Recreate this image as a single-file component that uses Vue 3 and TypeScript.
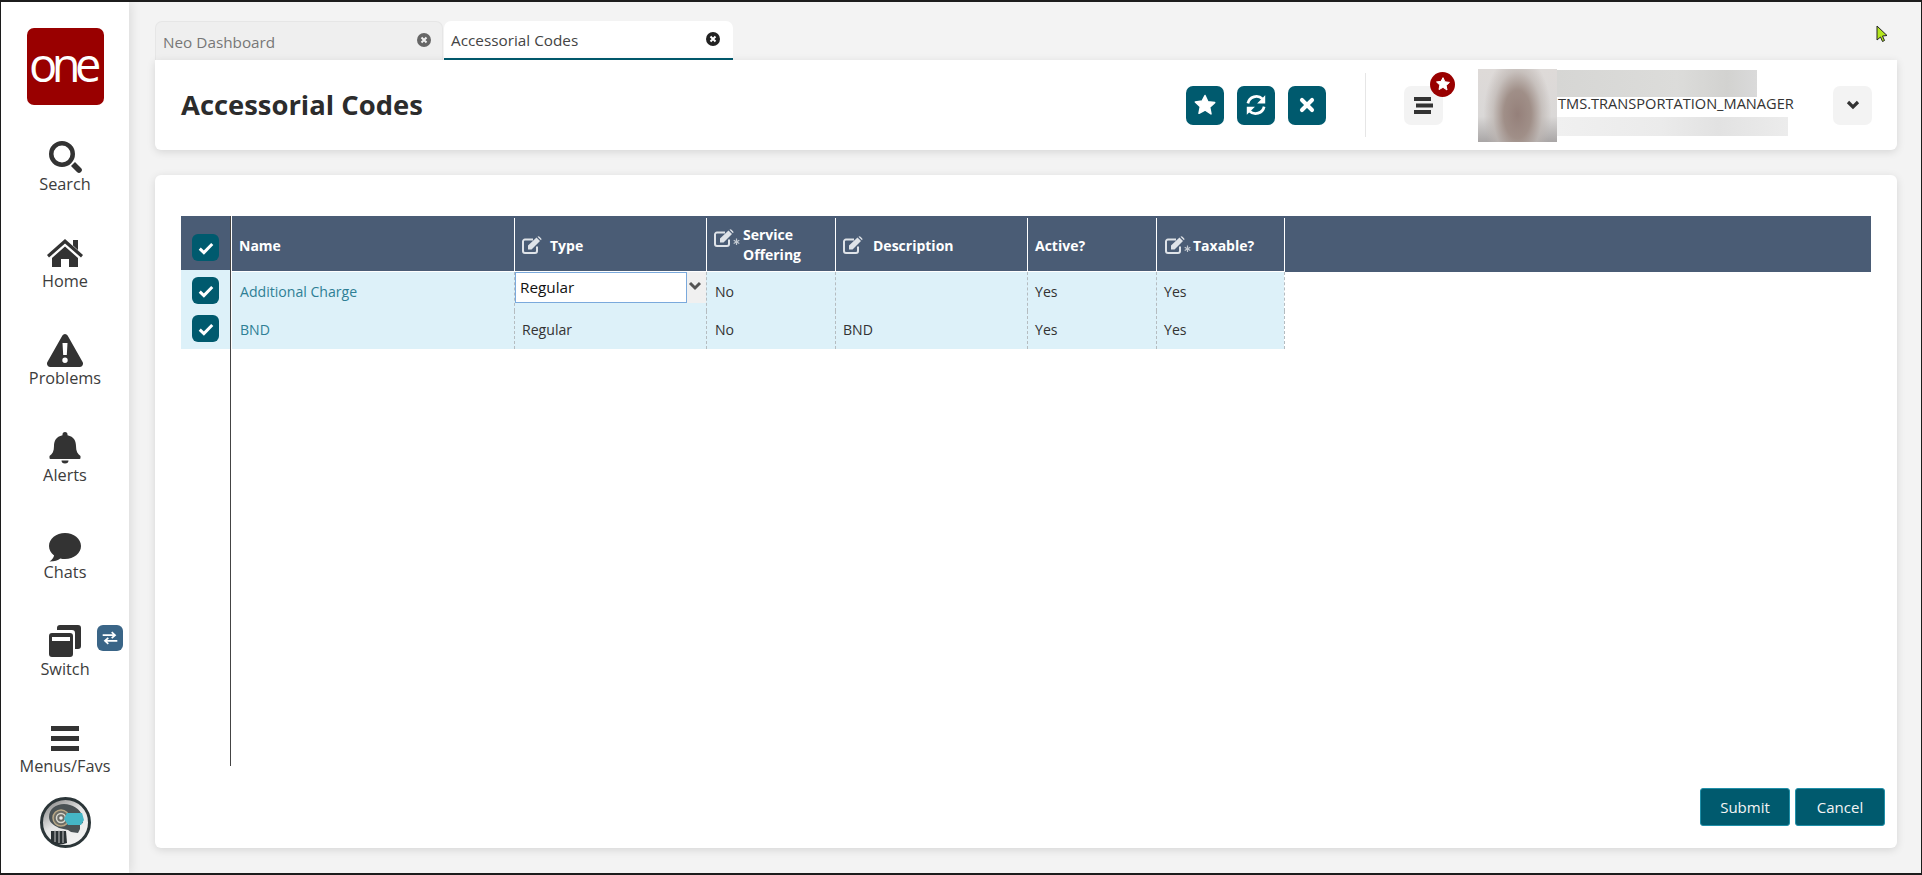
<script setup lang="ts">
interface NavItem { label: string; d: string; cls?: string }
interface Col { key: string; title: string[]; w: number; edit: boolean; req: boolean; cls: string }
interface Row { name: string; type: string; service: string; description: string; active: string; taxable: string; editing: boolean }

const nav: NavItem[] = [
  { label: 'Search', d: 'M17 6a13 13 0 1 1 0 26a13 13 0 1 1 0-26zM17 10.500a8.500 8.500 0 1 0 0 17a8.500 8.500 0 1 0 0-17zM26 31L30 27L36 33a2.800 2.800 0 0 1-4 4z' },
  { label: 'Home', d: 'M20 7L38 23L36 25.500L20 11.500L4 25.500L2 23zM28 8h5v10l-5-4.500zM20 14.500L33 26V35H24V27H16V35H7V26z' },
  { label: 'Problems', d: 'M20 5a3 3 0 0 1 2.600 1.500L37.600 33a3.400 3.400 0 0 1-2.600 5H5a3.400 3.400 0 0 1-2.600-5L17.400 6.500A3 3 0 0 1 20 5zM17.500 14L18.200 26h3.600L22.500 14zM20 28.500a2.700 2.700 0 1 0 0 5.400a2.700 2.700 0 1 0 0-5.400z' },
  { label: 'Alerts', d: 'M20 6a2.500 2.500 0 0 1 2.500 2.500v.7C29 10.500 31 15 31 20c0 5 1.500 8 4.500 10v2a1 1 0 0 1-1 1H5.500a1 1 0 0 1-1-1v-2c3-2 4.500-5 4.500-10c0-5 2-9.500 8.500-10.800V8.500A2.500 2.500 0 0 1 20 6zM16.500 34.500h7a3.500 3 0 0 1-7 0z' },
  { label: 'Chats', d: 'M20 10c8.800 0 16 5.800 16 13s-7.200 13-16 13c-1.600 0-3.200-.2-4.700-.6C13 37.500 9.500 38.300 4.500 38.500c2.500-1.500 4-3.600 4.600-6C5.900 30 4 26.700 4 23c0-7.200 7.200-13 16-13z' },
  { label: 'Switch', d: 'M15 5h18a3 3 0 0 1 3 3v18a3 3 0 0 1-3 3h-3V13a3 3 0 0 0-3-3H12V8a3 3 0 0 1 3-3zM7 13h18a3 3 0 0 1 3 3v18a3 3 0 0 1-3 3H7a3 3 0 0 1-3-3V16a3 3 0 0 1 3-3zM7 17v4h18v-4z' },
  { label: 'Menus/Favs', d: 'M6 9h28v5H6zM6 19h28v5H6zM6 29h28v5H6z', cls: 'last' },
]

const cols: Col[] = [
  { key: 'name', title: ['Name'], w: 282, edit: false, req: false, cls: 'c-name' },
  { key: 'type', title: ['Type'], w: 192, edit: true, req: false, cls: 'c-type' },
  { key: 'service', title: ['Service', 'Offering'], w: 129, edit: true, req: true, cls: 'c-service' },
  { key: 'description', title: ['Description'], w: 192, edit: true, req: false, cls: 'c-desc' },
  { key: 'active', title: ['Active?'], w: 129, edit: false, req: false, cls: 'c-active' },
  { key: 'taxable', title: ['Taxable?'], w: 128, edit: true, req: true, cls: 'c-tax' },
]

const rows: Row[] = [
  { name: 'Additional Charge', type: 'Regular', service: 'No', description: '', active: 'Yes', taxable: 'Yes', editing: true },
  { name: 'BND', type: 'Regular', service: 'No', description: 'BND', active: 'Yes', taxable: 'Yes', editing: false },
]

const cell = (r: Row, key: string): string => String(r[key as keyof Row])
const star = 'M12 2.500l2.900 6.200 6.800.9-5 4.700 1.300 6.700L12 17l-6 3.300 1.300-6.700-5-4.700 6.800-.9z'
</script>

<template>
  <div class="frame">
    <aside class="side">
      <div class="logo"><span>one</span></div>
      <nav class="nav">
        <div v-for="n in nav" :key="n.label" class="nav-item" :class="n.cls">
          <svg class="nav-icon" viewBox="0 0 40 40" width="40" height="40"><path :d="n.d" /></svg>
          <span class="nav-label">{{ n.label }}</span>
          <span v-if="n.label === 'Switch'" class="switch-badge">
            <svg viewBox="0 0 16 16" width="18" height="18">
              <path d="M1.500 5.500h10.500M9.500 2.800l3 2.700-3 2.700M14.500 10.500H4M6.500 7.800l-3 2.700 3 2.700" fill="none" stroke="#fff" stroke-width="1.500" />
            </svg>
          </span>
        </div>
      </nav>
      <svg class="robot" viewBox="0 0 51 51" width="51" height="51">
        <defs>
          <linearGradient id="rb" x1="0.1" y1="0.1" x2="0.7" y2="1">
            <stop offset="0" stop-color="#8d8d8d" />
            <stop offset="0.45" stop-color="#e6e6e6" />
            <stop offset="1" stop-color="#f4f4f4" />
          </linearGradient>
        </defs>
        <circle cx="25.500" cy="25.500" r="24" fill="url(#rb)" stroke="#2b3538" stroke-width="3" />
        <path d="M9 20c0-8 7-13 15-13s17 5 18 12l1 7-3 1v5l-2 4-7-1-3-2-9-2c-6-3-10-6-10-11z" fill="#4a5255" />
        <circle cx="21" cy="21" r="8" fill="#6d6d66" stroke="#b9a887" stroke-width="1.500" />
        <circle cx="21" cy="21" r="4.500" fill="none" stroke="#d9d9d0" stroke-width="1.500" />
        <circle cx="21" cy="21" r="1.800" fill="#eee" />
        <path d="M27 16h15l2 7-3 5H28l-4-6z" fill="#45b5c6" />
        <path d="M11 34h15l1 12c-5 2-11 2-16-1z" fill="#2b3134" />
        <path d="M15 33v12M19 33v13M23 33v13" stroke="#c9c9c9" stroke-width="1" />
      </svg>
    </aside>

    <main class="main">
      <div class="tabs">
        <div class="tab">
          <span>Neo Dashboard</span>
          <svg class="tab-x" viewBox="0 0 14 14" width="14" height="14"><circle cx="7" cy="7" r="7" fill="#666" /><path d="M4.500 4.500l5 5M9.500 4.500l-5 5" stroke="#f0f0f0" stroke-width="2" /></svg>
        </div>
        <div class="tab active">
          <span>Accessorial Codes</span>
          <svg class="tab-x" viewBox="0 0 14 14" width="14" height="14"><circle cx="7" cy="7" r="7" fill="#222" /><path d="M4.500 4.500l5 5M9.500 4.500l-5 5" stroke="#fff" stroke-width="2" /></svg>
        </div>
      </div>

      <header class="head card">
        <h1 class="title">Accessorial Codes</h1>
        <div class="actions">
          <button class="tool"><svg viewBox="0 0 24 24" width="24" height="24"><path :d="star" fill="#fff" stroke="#fff" stroke-width="1.500" stroke-linejoin="round" /></svg></button>
          <button class="tool">
            <svg viewBox="0 0 24 24" width="26" height="26">
              <path d="M4.500 10.500A8 8 0 0 1 18 6.500M19.500 13.500A8 8 0 0 1 6 17.500" fill="none" stroke="#fff" stroke-width="2.500" />
              <path d="M20.500 3v7.500h-7.500zM3.500 21v-7.500h7.500z" fill="#fff" />
            </svg>
          </button>
          <button class="tool"><svg viewBox="0 0 24 24" width="22" height="22"><path d="M6.500 6.500l11 11M17.500 6.500l-11 11" stroke="#fff" stroke-width="4.400" stroke-linecap="round" /></svg></button>
        </div>
        <div class="divider"></div>
        <div class="menu-btn">
          <svg viewBox="0 0 19 17" width="19" height="17"><path d="M0 0h17v4H0zM2 6.500h17v4H2zM0 13h17v4H0z" fill="#333" /></svg>
          <span class="badge"><svg viewBox="0 0 24 24" width="16" height="16"><path :d="star" fill="#fff" stroke="#fff" stroke-width="1.500" stroke-linejoin="round" /></svg></span>
        </div>
        <div class="avatar"></div>
        <div class="user">
          <div class="blur-a"></div>
          <div class="role">TMS.TRANSPORTATION_MANAGER</div>
          <div class="blur-b"></div>
        </div>
        <div class="chev-btn"><svg viewBox="0 0 14 10" width="14" height="10"><path d="M2 2l5 5 5-5" fill="none" stroke="#333" stroke-width="3.200" /></svg></div>
      </header>

      <section class="body card">
        <div class="grid">
          <div class="pick">
            <div class="pick-head"><span class="check"><svg viewBox="0 0 16 16" width="20" height="20"><path d="M3 8.500l3.300 3.200L13 4.800" fill="none" stroke="#fff" stroke-width="2.400" /></svg></span></div>
            <div v-for="r in rows" :key="r.name" class="pick-row"><span class="check"><svg viewBox="0 0 16 16" width="20" height="20"><path d="M3 8.500l3.300 3.200L13 4.800" fill="none" stroke="#fff" stroke-width="2.400" /></svg></span></div>
          </div>
          <div class="data">
            <div class="h-row">
              <div v-for="c in cols" :key="c.key" class="h-cell" :class="c.cls" :style="{ width: c.w + 'px' }">
                <svg v-if="c.edit" class="edit" :class="{ req: c.req }" :viewBox="c.req ? '0 0 26 20' : '0 0 20 20'">
                  <path d="M15 10.500v4.500a2 2 0 0 1-2 2H3a2 2 0 0 1-2-2V5.500a2 2 0 0 1 2-2h8" fill="none" stroke="#dfe3e8" stroke-width="2" />
                  <path d="M6 9.500L14.500 1.500L18 5L9.500 13.500H6zM15.500.8a1.500 1.500 0 0 1 2 0l1.500 1.500a1.500 1.500 0 0 1 0 2z" fill="#dfe3e8" />
                  <path v-if="c.req" d="M22.500 9.600v6.400M19.700 11.200l5.600 3.200M25.300 11.200l-5.600 3.200" stroke="#c3cad2" stroke-width="1.200" />
                </svg>
                <span class="h-text"><span v-for="t in c.title" :key="t" class="h-line">{{ t }}</span></span>
              </div>
              <div class="h-fill"></div>
            </div>
            <div v-for="r in rows" :key="r.name" class="d-row">
              <div v-for="c in cols" :key="c.key" class="d-cell" :class="c.cls" :style="{ width: c.w + 'px' }">
                <template v-if="c.key === 'type' && r.editing">
                  <div class="select">
                    <span class="select-val">{{ r.type }}</span>
                    <span class="select-arrow"><svg viewBox="0 0 14 10" width="14" height="10"><path d="M2 2l5 5 5-5" fill="none" stroke="#555" stroke-width="3" /></svg></span>
                  </div>
                </template>
                <a v-else-if="c.key === 'name'" class="link">{{ r.name }}</a>
                <span v-else>{{ cell(r, c.key) }}</span>
              </div>
            </div>
          </div>
        </div>
        <div class="foot">
          <button class="btn">Submit</button>
          <button class="btn">Cancel</button>
        </div>
      </section>
    </main>

    <svg class="cursor" viewBox="0 0 12 18" width="12" height="18"><path d="M1 1v14l3.500-3 2 4.500 2-1-2-4.500 4.500-.5z" fill="#b4e61e" stroke="#222" stroke-width="1" /></svg>
  </div>
</template>

<style>
html, body { margin: 0; padding: 0; background: #f3f3f3; }
</style>

<style scoped>
.frame {
  position: relative;
  box-sizing: border-box;
  width: 1922px;
  height: 875px;
  display: flex;
  overflow: hidden;
  background: #f3f3f3;
  border-style: solid;
  border-color: #1c1c1c;
  border-width: 2px 1px 2px 1px;
  font-family: "Open Sans", "Liberation Sans", sans-serif;
  color: #333;
}
.side {
  width: 128px;
  flex: none;
  background: #fff;
  box-shadow: 2px 0 10px rgba(0, 0, 0, 0.1);
  display: flex;
  flex-direction: column;
  align-items: center;
  z-index: 1;
}
.logo {
  margin-top: 26px;
  width: 77px;
  height: 77px;
  background: #990000;
  border-radius: 7px;
  display: flex;
  align-items: center;
  justify-content: center;
  color: #fff;
  font-size: 47px;
  font-weight: 400;
  letter-spacing: -5.500px;
  line-height: 1;
}
.logo span { margin-left: -5px; margin-top: -5px; }
.nav { margin-top: 30px; width: 100%; display: flex; flex-direction: column; }
.nav-item {
  position: relative;
  height: 97px;
  display: flex;
  flex-direction: column;
  align-items: center;
}
.nav-item.last { height: 80px; }
.nav-icon { fill: #333; display: block; }
.nav-label { margin-top: -2px; font-size: 16.300px; line-height: 22px; color: #3c3c3c; }
.switch-badge {
  position: absolute;
  left: 96px;
  top: 5px;
  width: 26px;
  height: 26px;
  border-radius: 6px;
  background: #3a6587;
  display: flex;
  align-items: center;
  justify-content: center;
}
.robot { display: block; }

.main { width: 1742px; margin-left: 26px; flex: none; display: flex; flex-direction: column; padding-top: 19px; }
.tabs { display: flex; height: 39px; gap: 1px; }
.tab {
  box-sizing: border-box;
  width: 288px;
  background: #efefef;
  border: 1px solid #e6e6e6;
  border-bottom: 0;
  border-radius: 7px 7px 0 0;
  display: flex;
  align-items: center;
  justify-content: space-between;
  padding: 0 11px 0 7px;
  font-size: 15.300px;
  color: #777;
}
.tab > span { margin-top: 1px; }
.tab-x { margin-top: -2px; }
.tab.active {
  width: 289px;
  background: #fff;
  border: 0;
  border-bottom: 2px solid #005a6e;
  color: #444;
  padding: 0 13px 0 7px;
}
.card { background: #fff; border-radius: 0 0 6px 6px; box-shadow: 0 2px 8px rgba(0, 0, 0, 0.12); }
.head { height: 90px; display: flex; align-items: center; padding: 0 25px 0 26px; }
.title { margin: -2px 0 0; font-size: 27.400px; font-weight: 700; color: #2c2c2c; }
.actions { margin-left: auto; display: flex; gap: 13px; }
.tool {
  width: 38px;
  height: 39px;
  padding: 0;
  border: 0;
  border-radius: 7px;
  background: #005a6e;
  display: flex;
  align-items: center;
  justify-content: center;
}
.divider { width: 1px; height: 64px; margin: 0 38px 0 39px; background: #e6e6e6; }
.menu-btn {
  position: relative;
  width: 39px;
  height: 39px;
  border-radius: 7px;
  background: #f3f3f3;
  display: flex;
  align-items: center;
  justify-content: center;
}
.badge {
  position: absolute;
  left: 26px;
  top: -14px;
  width: 25px;
  height: 25px;
  border-radius: 50%;
  background: #990000;
  display: flex;
  align-items: center;
  justify-content: center;
}
.avatar {
  margin-left: 35px;
  width: 79px;
  height: 73px;
  background:
    radial-gradient(ellipse 34px 60px at 50% 62%, #95807a 0%, #a08f88 40%, rgba(190, 182, 178, 0.7) 72%, rgba(225, 225, 225, 0) 100%),
    linear-gradient(#dedad8, #dad8d7 65%, #a9a6a6);
}
.user { width: 276px; display: flex; flex-direction: column; height: 66px; align-self: flex-start; margin-top: 10px; }
.blur-a { width: 200px; height: 27px; flex: none; background: linear-gradient(90deg, #d6d6d4, #dcdcda 60%, #d2d2d0 85%, #dadada); }
.role { height: 20px; flex: none; line-height: 12px; padding-left: 1px; font-size: 14.600px; color: #333; white-space: nowrap; }
.blur-b { width: 231px; height: 19px; flex: none; background: linear-gradient(90deg, #f0f0f0, #ebebeb 45%, #e2e2e2 70%, #ececec); }
.chev-btn {
  width: 39px;
  height: 39px;
  border-radius: 7px;
  background: #f3f3f3;
  display: flex;
  align-items: center;
  justify-content: center;
}

.body { margin-top: 25px; height: 673px; box-sizing: border-box; padding: 41px 26px 0; border-radius: 6px; }
.grid { display: flex; height: 550px; width: 1690px; }
.pick { width: 49px; flex: none; border-right: 1px solid #444; }
.pick-head { height: 54px; background: #4a5c75; display: flex; align-items: flex-start; justify-content: center; padding-top: 18px; box-sizing: border-box; }
.pick-row { box-sizing: border-box; background: #ddf1f9; display: flex; align-items: flex-start; justify-content: center; }
.pick-row:nth-child(2) { height: 41px; padding-top: 7px; }
.pick-row:nth-child(3) { height: 38px; padding-top: 4px; }
.check {
  width: 27px;
  height: 27px;
  border-radius: 6px;
  background: #005a6e;
  display: flex;
  align-items: center;
  justify-content: center;
}
.data { flex: 1; padding-left: 1px; min-width: 0; }
.h-row { display: flex; height: 56px; background: #4a5c75; }
.h-cell {
  box-sizing: border-box;
  margin-top: 2px;
  height: 54px;
  flex: none;
  display: flex;
  align-items: center;
  gap: 8px;
  padding: 3px 0 0 7px;
  border-left: 1px solid #fff;
  border-bottom: 1px solid #fff;
  font-size: 14px;
  font-weight: 700;
  color: #fff;
}
.h-cell.c-name { border-left: 0; padding-left: 7px; }
.h-cell.c-service { gap: 3px; padding-top: 0; }
.h-cell.c-tax { gap: 2px; padding-left: 8px; }
.h-cell.c-desc { gap: 10px; }
.h-fill { flex: 1; margin-top: 2px; border-left: 1px solid #fff; }
.h-text { display: flex; flex-direction: column; line-height: 20px; }
.h-line { display: block; white-space: nowrap; }
.edit { width: 20px; height: 20px; flex: none; }
.edit.req { width: 26px; }
.c-service .edit { align-self: flex-start; margin-top: 11px; }
.d-row { display: flex; height: 38.500px; width: 1052px; background: #ddf1f9; }
.d-row::after { content: ""; width: 0; border-left: 1px dashed #b5bcc0; }
.d-cell {
  box-sizing: border-box;
  flex: none;
  display: flex;
  align-items: center;
  padding-left: 7px;
  font-size: 14.100px;
  color: #333;
  border-left: 1px dashed #b5bcc0;
  position: relative;
}
.d-cell.c-name { border-left: 0; padding-left: 8px; }
.d-cell.c-service { padding-left: 8px; }
.link { color: #2e7f95; }
.select {
  position: absolute;
  left: 0;
  top: 0;
  right: 0;
  height: 31px;
  display: flex;
}
.select-val {
  box-sizing: border-box;
  width: 172px;
  height: 31px;
  border: 1px solid #7aa9dc;
  background: #fff;
  padding-left: 4px;
  line-height: 29px;
  font-size: 15.300px;
  color: #111;
}
.select-arrow {
  flex: 1;
  background: #f0f0f0;
  display: flex;
  justify-content: center;
  padding: 9px 4px 0 0;
  box-sizing: border-box;
  height: 31px;
}
.foot { display: flex; justify-content: flex-end; gap: 5px; margin: 22px -14px 0 0; }
.btn {
  box-sizing: border-box;
  width: 90px;
  height: 38px;
  border: 1px solid #1f8fa8;
  border-radius: 3px;
  background: #005a6e;
  color: #f4f4f4;
  font-family: inherit;
  font-size: 15px;
  padding: 0;
}
.cursor { position: absolute; left: 1875px; top: 23px; }
</style>
